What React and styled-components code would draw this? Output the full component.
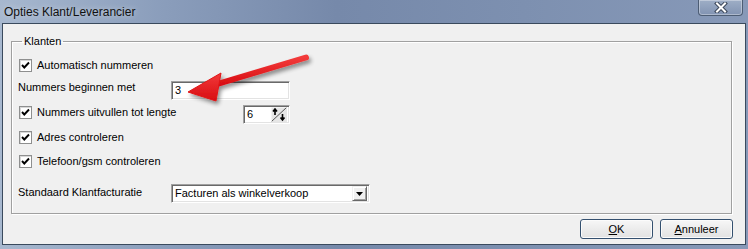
import styled, { createGlobalStyle } from "styled-components";

const GlobalStyle = createGlobalStyle`
  html, body {
    margin: 0;
    padding: 0;
    background: #8294b4;
  }
  body {
    font-family: "Liberation Sans", Arial, sans-serif;
    font-size: 11px;
    color: #000;
  }
`;

const Window = styled.div`
  position: relative;
  width: 748px;
  height: 249px;
  display: flex;
  flex-direction: column;
  background: linear-gradient(to right, #a7b8cf 0%, #8a9dbb 22%, #7689aa 45%, #7d90b0 70%, #8799b8 100%);
  overflow: hidden;
`;

const TitleBar = styled.div`
  height: 23px;
  display: flex;
  align-items: flex-start;
  justify-content: space-between;
  flex: 0 0 auto;
`;

const Title = styled.span`
  font-family: "Liberation Sans", Arial, sans-serif;
  font-size: 12px;
  line-height: 14px;
  margin: 5px 0 0 4px;
  color: #111;
  text-shadow: 0 0 6px rgba(255, 255, 255, 0.55);
`;

const CloseButton = styled.div`
  width: 43px;
  height: 15px;
  margin-right: 5px;
  border: 1px solid #4d5d74;
  border-top: none;
  border-radius: 0 0 4px 4px;
  box-shadow: inset 0 0 0 1px rgba(255, 255, 255, 0.35);
  background: linear-gradient(to bottom, #9eaec6, #8193b2);
  display: flex;
  align-items: center;
  justify-content: center;
`;

const Client = styled.div`
  flex: 1 1 auto;
  margin: 0 2px 4px 2px;
  border: 1px solid #3a4a5d;
  background: #f0f0f0;
  display: flex;
  flex-direction: column;
`;

const Group = styled.fieldset`
  margin: 10px 13px 0 8px;
  padding: 0 0 0 6px;
  height: 180px;
  box-sizing: border-box;
  border: 1px solid #a0a0a0;
  box-shadow: 1px 1px 0 #fff, inset 1px 1px 0 #fff;
  display: flex;
  flex-direction: column;
`;

const Legend = styled.legend`
  margin-left: 4px;
  padding: 0 2px;
  line-height: 14px;
  font-size: 11px;
`;

const Row = styled.div`
  display: flex;
  align-items: ${(p) => p.$align || "center"};
  height: ${(p) => p.$h}px;
  margin-top: ${(p) => p.$top}px;
`;

const CheckItem = styled.label`
  display: flex;
  align-items: center;
  gap: 5px;
  margin-left: 1px;
  height: 14px;
  flex: 0 0 ${(p) => (p.$w ? `${p.$w}px` : "auto")};
`;

const Box = styled.span`
  width: 11px;
  height: 11px;
  border: 1px solid #8e8f8f;
  box-shadow: inset 1px 1px 0 #d8d8d8;
  background: #fff;
  display: flex;
  align-items: center;
  justify-content: center;
`;

const FieldLabel = styled.span`
  flex: 0 0 153px;
  line-height: 13px;
  padding-top: ${(p) => p.$pt || 0}px;
`;

const Sunken = styled.div`
  box-sizing: border-box;
  width: ${(p) => p.$w}px;
  height: 19px;
  margin-top: ${(p) => p.$mt || 0}px;
  border-top: 1px solid #a0a0a0;
  border-left: 1px solid #a0a0a0;
  border-bottom: 1px solid #fff;
  border-right: 1px solid #fff;
  box-shadow: inset 1px 1px 0 #696969, inset -1px -1px 0 #e3e3e3;
  background: #fff;
  display: flex;
  align-items: center;
  padding: 0 2px 0 3px;
`;

const Value = styled.span`
  flex: 1;
  line-height: 13px;
  white-space: nowrap;
`;

const DropButton = styled.span`
  width: 15px;
  height: 15px;
  box-sizing: border-box;
  background: #f0f0f0;
  border-top: 1px solid #f0f0f0;
  border-left: 1px solid #f0f0f0;
  border-right: 1px solid #696969;
  border-bottom: 1px solid #696969;
  box-shadow: inset 1px 1px 0 #fff, inset -1px -1px 0 #a0a0a0;
  display: flex;
  align-items: center;
  justify-content: center;
`;

const Buttons = styled.div`
  display: flex;
  justify-content: flex-end;
  gap: 7px;
  margin: 5px 12px 0 0;
`;

const Button = styled.button`
  width: 73px;
  height: 20px;
  box-sizing: border-box;
  border: 1px solid #34506f;
  border-radius: 3px;
  background: linear-gradient(to bottom, #f7f7f7 0%, #ececec 50%, #e2e2e2 100%);
  box-shadow: inset 0 0 0 1px #fbfbfb;
  font-family: "Liberation Sans", Arial, sans-serif;
  font-size: 11px;
  color: #000;
  padding: 0;

  u {
    text-decoration: underline;
  }
`;

const ArrowLayer = styled.svg`
  position: absolute;
  left: 180px;
  top: 45px;
  overflow: visible;
  pointer-events: none;
`;

const Check = () => (
  <svg width="9" height="9" viewBox="0 0 9 9">
    <path d="M1 4 L3.3 6.5 L8 1.5" fill="none" stroke="#000" strokeWidth="1.9" />
  </svg>
);

const CheckRow = ({ children, w }) => (
  <CheckItem $w={w}>
    <Box>
      <Check />
    </Box>
    <span>{children}</span>
  </CheckItem>
);

export default function App() {
  return (
    <Window>
      <GlobalStyle />
      <TitleBar>
        <Title>Opties Klant/Leverancier</Title>
        <CloseButton>
          <svg width="14" height="11" viewBox="0 0 14 11">
            <path d="M3 1.5 L11 9.5 M11 1.5 L3 9.5" stroke="#3b4658" strokeWidth="4" strokeLinecap="square" />
            <path d="M3 1.5 L11 9.5 M11 1.5 L3 9.5" stroke="#fff" strokeWidth="2" strokeLinecap="square" />
          </svg>
        </CloseButton>
      </TitleBar>
      <Client>
        <Group>
          <Legend>Klanten</Legend>
          <Row $h={16} $top={9}>
            <CheckRow>Automatisch nummeren</CheckRow>
          </Row>
          <Row $h={19} $top={8} $align="flex-start">
            <FieldLabel $pt={0}>Nummers beginnen met</FieldLabel>
            <Sunken $w={119}>
              <Value>3</Value>
            </Sunken>
          </Row>
          <Row $h={19} $top={5} $align="flex-start">
            <CheckRow w={224}>Nummers uitvullen tot lengte</CheckRow>
            <Sunken $w={47} $mt={0}>
              <Value>6</Value>
              <svg width="16" height="15" viewBox="0 0 16 15">
                <rect x="0" y="0" width="16" height="15" fill="#e6e6e6" />
                <path d="M0.5 14.5 L15.5 0.5" stroke="#555" strokeWidth="1" />
                <path d="M0 0 H16 M0 0 V15" stroke="#fff" strokeWidth="1" />
                <path d="M4 2 V8 M2 4.5 L4 2 L6 4.5" fill="none" stroke="#000" strokeWidth="1.6" />
                <path d="M11.5 7 V13 M9.5 10.5 L11.5 13 L13.5 10.5" fill="none" stroke="#000" strokeWidth="1.6" />
              </svg>
            </Sunken>
          </Row>
          <Row $h={16} $top={5}>
            <CheckRow>Adres controleren</CheckRow>
          </Row>
          <Row $h={16} $top={8}>
            <CheckRow>Telefoon/gsm controleren</CheckRow>
          </Row>
          <Row $h={19} $top={15} $align="flex-start">
            <FieldLabel $pt={2}>Standaard Klantfacturatie</FieldLabel>
            <Sunken $w={199}>
              <Value>Facturen als winkelverkoop</Value>
              <DropButton>
                <svg width="7" height="4" viewBox="0 0 7 4">
                  <path d="M0 0 H7 L3.5 4 Z" fill="#000" />
                </svg>
              </DropButton>
            </Sunken>
          </Row>
        </Group>
        <Buttons>
          <Button>
            <u>O</u>K
          </Button>
          <Button>
            <u>A</u>nnuleer
          </Button>
        </Buttons>
      </Client>
      <ArrowLayer width="140" height="65" viewBox="180 45 140 65">
        <defs>
          <filter id="shadow" x="-20%" y="-40%" width="140%" height="180%">
            <feGaussianBlur in="SourceAlpha" stdDeviation="2" />
            <feOffset dx="2" dy="3" result="b" />
            <feComponentTransfer>
              <feFuncA type="linear" slope="0.45" />
            </feComponentTransfer>
            <feMerge>
              <feMergeNode />
              <feMergeNode in="SourceGraphic" />
            </feMerge>
          </filter>
          <linearGradient id="red" x1="0" y1="0" x2="0" y2="1">
            <stop offset="0" stopColor="#f23a3a" />
            <stop offset="1" stopColor="#d80d12" />
          </linearGradient>
        </defs>
        <g filter="url(#shadow)">
          <path d="M214 85 L306 57.5" stroke="url(#red)" strokeWidth="6" strokeLinecap="round" />
          <path d="M188 92 L221 73 L216 101 Z" fill="url(#red)" stroke="#e01418" strokeWidth="1" strokeLinejoin="round" />
        </g>
      </ArrowLayer>
    </Window>
  );
}
